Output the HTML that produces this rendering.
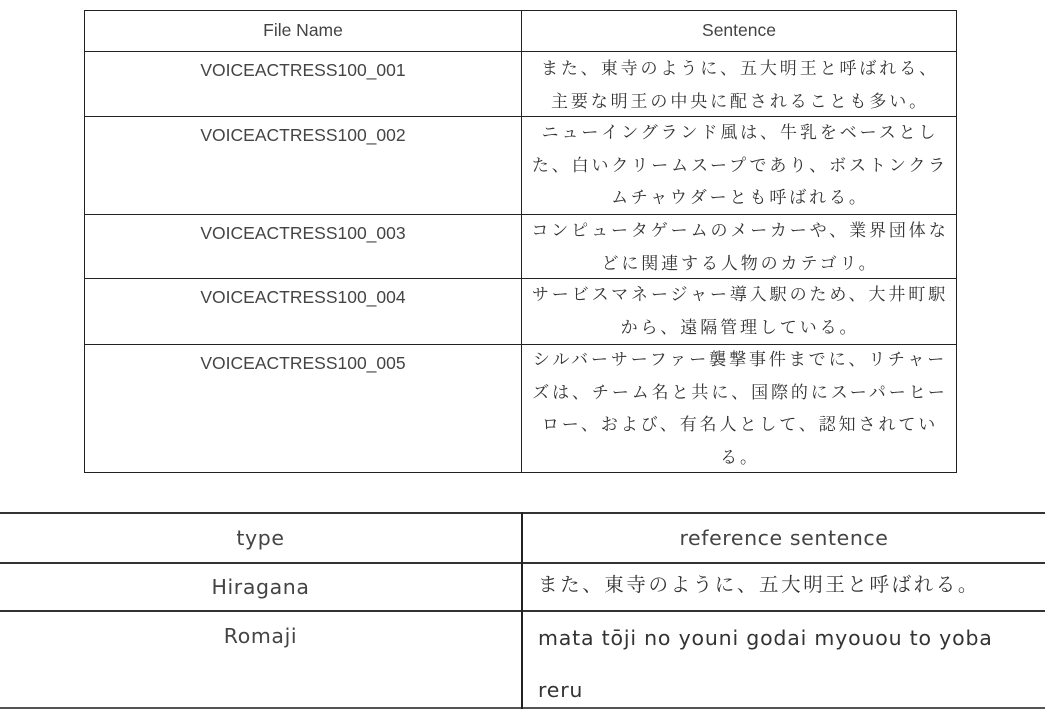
<!DOCTYPE html>
<html><head><meta charset="utf-8"><style>
body{margin:0;width:1045px;height:710px;background:#fff;position:relative;overflow:hidden;font-family:"Liberation Sans","Noto Sans CJK JP",sans-serif;color:#444}
.h{position:absolute;background:#222}
.t{position:absolute;text-align:center;font-size:17.5px;line-height:32px;color:#444}
.j{position:absolute;text-align:center;font-family:"Liberation Serif","Noto Serif CJK JP",serif;font-size:17px;letter-spacing:2.9px;line-height:32.5px;color:#333}
.u{position:absolute;text-align:center;font-family:"DejaVu Sans",sans-serif;font-size:20.5px;letter-spacing:0.6px;line-height:32px;color:#444}
</style></head><body>
<div class="h" style="left:84px;top:10px;width:873px;height:1px"></div>
<div class="h" style="left:84px;top:51px;width:873px;height:1px"></div>
<div class="h" style="left:84px;top:116px;width:873px;height:1px"></div>
<div class="h" style="left:84px;top:214px;width:873px;height:1px"></div>
<div class="h" style="left:84px;top:278px;width:873px;height:1px"></div>
<div class="h" style="left:84px;top:344px;width:873px;height:1px"></div>
<div class="h" style="left:84px;top:472px;width:873px;height:1px"></div>
<div class="h" style="left:84px;top:10px;width:1px;height:463px"></div>
<div class="h" style="left:521px;top:10px;width:1px;height:463px"></div>
<div class="h" style="left:956px;top:10px;width:1px;height:463px"></div>
<div class="t" style="left:85px;width:436px;top:14px">File Name</div>
<div class="t" style="left:522px;width:434px;top:14px">Sentence</div>
<div class="t" style="left:85px;width:436px;top:54px">VOICEACTRESS100_001</div>
<div class="t" style="left:85px;width:436px;top:119px">VOICEACTRESS100_002</div>
<div class="t" style="left:85px;width:436px;top:217px">VOICEACTRESS100_003</div>
<div class="t" style="left:85px;width:436px;top:281px">VOICEACTRESS100_004</div>
<div class="t" style="left:85px;width:436px;top:347px">VOICEACTRESS100_005</div>
<div class="j" style="left:528px;width:424px;top:53px">また、東寺のように、五大明王と呼ばれる、<br>主要な明王の中央に配されることも多い。</div>
<div class="j" style="left:528px;width:424px;top:117px">ニューイングランド風は、牛乳をベースとし<br>た、白いクリームスープであり、ボストンクラ<br>ムチャウダーとも呼ばれる。</div>
<div class="j" style="left:528px;width:424px;top:215px">コンピュータゲームのメーカーや、業界団体な<br>どに関連する人物のカテゴリ。</div>
<div class="j" style="left:528px;width:424px;top:279px">サービスマネージャー導入駅のため、大井町駅<br>から、遠隔管理している。</div>
<div class="j" style="left:528px;width:424px;top:344px">シルバーサーファー襲撃事件までに、リチャー<br>ズは、チーム名と共に、国際的にスーパーヒー<br>ロー、および、有名人として、認知されてい<br>る。</div>
<div class="h" style="left:0;top:512px;width:1045px;height:2px;background:#333"></div>
<div class="h" style="left:0;top:562px;width:1045px;height:2px;background:#333"></div>
<div class="h" style="left:0;top:610px;width:1045px;height:2px;background:#333"></div>
<div class="h" style="left:0;top:707px;width:1045px;height:2px;background:#555"></div>
<div class="h" style="left:521px;top:512px;width:2px;height:197px"></div>
<div class="u" style="left:0;width:521px;top:522px">type</div>
<div class="u" style="left:523px;width:522px;top:522px">reference sentence</div>
<div class="u" style="left:0;width:521px;top:571px">Hiragana</div>
<div class="u" style="left:0;width:521px;top:620px">Romaji</div>
<div style="position:absolute;left:538px;top:570px;font-family:'Liberation Serif','Noto Serif CJK JP',serif;font-size:19.5px;letter-spacing:2.6px;line-height:32px;color:#333;white-space:nowrap">また、東寺のように、五大明王と呼ばれる。</div>
<div style="position:absolute;left:538px;top:612px;font-family:'DejaVu Sans',sans-serif;font-size:20.5px;letter-spacing:0.8px;line-height:52px;color:#333;white-space:nowrap">mata tōji no youni godai myouou to yoba<br>reru</div>
</body></html>
